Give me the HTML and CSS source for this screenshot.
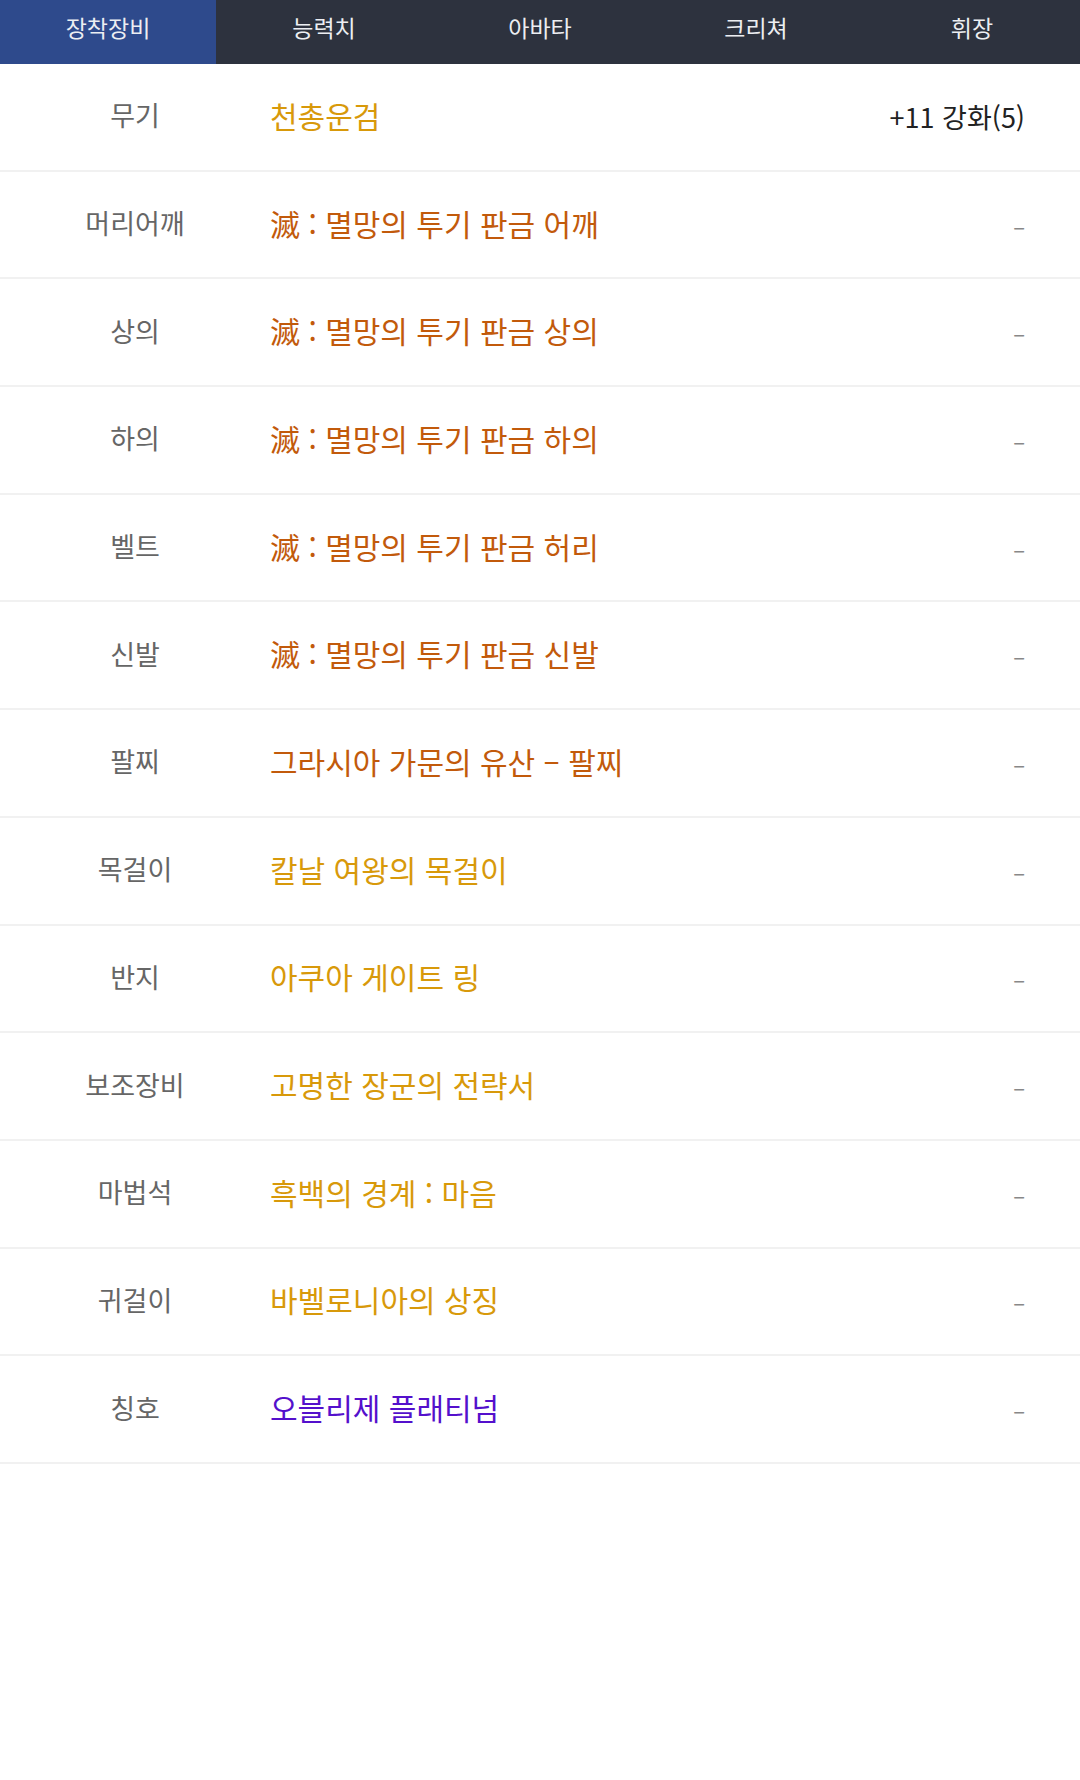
FILE: index.html
```html
<!DOCTYPE html>
<html lang="ko">
<head>
    <meta charset="UTF-8">
    <meta name="viewport" content="width=device-width, initial-scale=1.0">
    <title>장착장비</title>
    <link rel="stylesheet" href="styles.css">
</head>
<body>
    <nav class="tabs">
        <a class="tab active">장착장비</a>
        <a class="tab">능력치</a>
        <a class="tab">아바타</a>
        <a class="tab">크리쳐</a>
        <a class="tab">휘장</a>
    </nav>

    <ul class="equip-list">
        <li class="equip-row">
            <span class="slot">무기</span>
            <span class="item unique">천총운검</span>
            <span class="extra strong">+11 강화(5)</span>
        </li>
        <li class="equip-row">
            <span class="slot">머리어깨</span>
            <span class="item legendary">滅 : 멸망의 투기 판금 어깨</span>
            <span class="extra">–</span>
        </li>
        <li class="equip-row">
            <span class="slot">상의</span>
            <span class="item legendary">滅 : 멸망의 투기 판금 상의</span>
            <span class="extra">–</span>
        </li>
        <li class="equip-row">
            <span class="slot">하의</span>
            <span class="item legendary">滅 : 멸망의 투기 판금 하의</span>
            <span class="extra">–</span>
        </li>
        <li class="equip-row">
            <span class="slot">벨트</span>
            <span class="item legendary">滅 : 멸망의 투기 판금 허리</span>
            <span class="extra">–</span>
        </li>
        <li class="equip-row">
            <span class="slot">신발</span>
            <span class="item legendary">滅 : 멸망의 투기 판금 신발</span>
            <span class="extra">–</span>
        </li>
        <li class="equip-row">
            <span class="slot">팔찌</span>
            <span class="item legendary">그라시아 가문의 유산 – 팔찌</span>
            <span class="extra">–</span>
        </li>
        <li class="equip-row">
            <span class="slot">목걸이</span>
            <span class="item unique">칼날 여왕의 목걸이</span>
            <span class="extra">–</span>
        </li>
        <li class="equip-row">
            <span class="slot">반지</span>
            <span class="item unique">아쿠아 게이트 링</span>
            <span class="extra">–</span>
        </li>
        <li class="equip-row">
            <span class="slot">보조장비</span>
            <span class="item unique">고명한 장군의 전략서</span>
            <span class="extra">–</span>
        </li>
        <li class="equip-row">
            <span class="slot">마법석</span>
            <span class="item unique">흑백의 경계 : 마음</span>
            <span class="extra">–</span>
        </li>
        <li class="equip-row">
            <span class="slot">귀걸이</span>
            <span class="item unique">바벨로니아의 상징</span>
            <span class="extra">–</span>
        </li>
        <li class="equip-row">
            <span class="slot">칭호</span>
            <span class="item epic">오블리제 플래티넘</span>
            <span class="extra">–</span>
        </li>
    </ul>
</body>
</html>
```

FILE: styles.css
```css
body {
    margin: 0;
    padding: 0;
    background: #fff;
    font-family: "Noto Sans CJK KR", "Noto Sans", sans-serif;
}

/* top tabs */
.tabs {
    display: grid;
    grid-template-columns: repeat(5, 1fr);
    height: 64px;
    background: #2d323e;
}
.tab {
    display: flex;
    align-items: center;
    justify-content: center;
    padding-bottom: 10px;
    color: #eceef2;
    font-size: 23px;
    cursor: pointer;
}
.tab.active {
    background: #2e4a8c;
}

/* equipment rows */
.equip-list {
    list-style: none;
    margin: 0;
    padding: 0;
}
.equip-row {
    display: grid;
    grid-template-columns: 270px 1fr auto;
    align-items: center;
    height: 105.7px;
    padding-right: 55px;
    border-bottom: 2px solid #f1f1f1;
}
.slot {
    text-align: center;
    color: #666;
    font-size: 27px;
    margin-top: -4px;
}
.item {
    font-size: 30px;
    margin-top: -4px;
}
.item.unique {
    color: #d8990a;
}
.item.legendary {
    color: #c25a0b;
}
.item.epic {
    color: #5410cc;
}
.extra {
    color: #888;
    font-size: 22px;
}
.extra.strong {
    color: #222;
    font-size: 27px;
}
```
